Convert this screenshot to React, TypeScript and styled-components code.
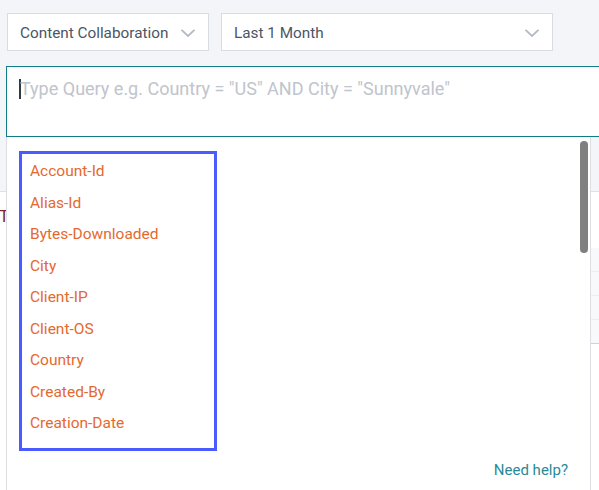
import React from "react";
import styled, { createGlobalStyle } from "styled-components";

const GlobalStyle = createGlobalStyle`
  html, body {
    margin: 0;
    padding: 0;
    overflow: hidden;
    background: #f4f5f9;
    font-family: Roboto, "Liberation Sans", Arial, sans-serif;
  }
`;

const Page = styled.div`
  position: relative;
  width: 640px;
  height: 490px;
  padding-top: 13px;
  box-sizing: border-box;
`;

const Toolbar = styled.div`
  display: flex;
  gap: 12px;
  padding-left: 7px;
`;

const Select = styled.div<{ $width: number }>`
  display: flex;
  align-items: center;
  justify-content: space-between;
  width: ${(p) => p.$width}px;
  height: 38px;
  box-sizing: border-box;
  padding: 1px 12px 0 12px;
  background: #fff;
  border: 1px solid #d9dce2;
  color: #4c5566;
  font-size: 15.3px;
`;

const Chevron = () => (
  <svg width="16" height="10" viewBox="0 0 16 10">
    <path d="M1.5 1.8 L8 8 L14.5 1.8" fill="none" stroke="#b4b9c3" strokeWidth="1.8" />
  </svg>
);

const QueryBox = styled.div`
  margin: 15px 0 0 6px;
  height: 71px;
  box-sizing: border-box;
  background: #fff;
  border: 1px solid #0f7d88;
  padding: 11px 0 0 12px;
  display: flex;
  align-items: flex-start;
`;

const Caret = styled.span`
  display: inline-block;
  width: 2px;
  height: 20px;
  margin-top: 1px;
  background: #333843;
`;

const Placeholder = styled.span`
  margin-left: -1px;
  color: #c0c4cc;
  font-size: 18px;
  line-height: 22px;
`;

const Strip = styled.div`
  height: 54px;
  border-bottom: 1px solid #dde0e6;
`;

const Panel = styled.div`
  background: #fff;
  height: 320px;
  padding-top: 14px;
`;

const PanelTitle = styled.div`
  margin-left: -1px;
  color: #7b2b2b;
  font-size: 17px;
  line-height: 20px;
`;

const SideRows = styled.div`
  margin: 22px 0 0 591px;
  width: 40px;
`;

const SideRow = styled.div<{ $accent?: boolean }>`
  height: 23px;
  border-bottom: 1px solid ${(p) => (p.$accent ? "#c9cff5" : "#eceef1")};
  background: #f8f9fa;
`;

const Dropdown = styled.div`
  position: absolute;
  top: 137px;
  left: 6px;
  width: 585px;
  height: 380px;
  background: #fff;
  border-left: 1px solid #dcdee2;
  border-right: 1px solid #dcdee2;
  box-sizing: border-box;
  padding: 14px 0 0 12px;
`;

const ListBox = styled.ul`
  list-style: none;
  margin: 0;
  width: 198px;
  height: 300px;
  box-sizing: border-box;
  border: 3px solid #4a5cff;
  padding: 2px 0 0 8px;
`;

const Item = styled.li`
  color: #e5692e;
  font-size: 15.5px;
  line-height: 31.5px;
`;

const Help = styled.div`
  margin: 10px 22px 0 0;
  text-align: right;
  color: #2b8a99;
  font-size: 15px;
  line-height: 18px;
`;

const Thumb = styled.div`
  position: absolute;
  top: 4px;
  right: 2px;
  width: 8px;
  height: 112px;
  border-radius: 4px;
  background: #808080;
`;

const fields = [
  "Account-Id",
  "Alias-Id",
  "Bytes-Downloaded",
  "City",
  "Client-IP",
  "Client-OS",
  "Country",
  "Created-By",
  "Creation-Date",
];

export default function App() {
  return (
    <>
      <GlobalStyle />
      <Page>
        <Toolbar>
          <Select $width={202}>
            <span>Content Collaboration</span>
            <Chevron />
          </Select>
          <Select $width={332}>
            <span>Last 1 Month</span>
            <Chevron />
          </Select>
        </Toolbar>
        <QueryBox>
          <Caret />
          <Placeholder>Type Query e.g. Country = "US" AND City = "Sunnyvale"</Placeholder>
        </QueryBox>
        <Strip />
        <Panel>
          <PanelTitle>T</PanelTitle>
          <SideRows>
            <SideRow />
            <SideRow />
            <SideRow />
            <SideRow $accent />
          </SideRows>
        </Panel>
        <Dropdown>
          <Thumb />
          <ListBox>
            {fields.map((f) => (
              <Item key={f}>{f}</Item>
            ))}
          </ListBox>
          <Help>Need help?</Help>
        </Dropdown>
      </Page>
    </>
  );
}
